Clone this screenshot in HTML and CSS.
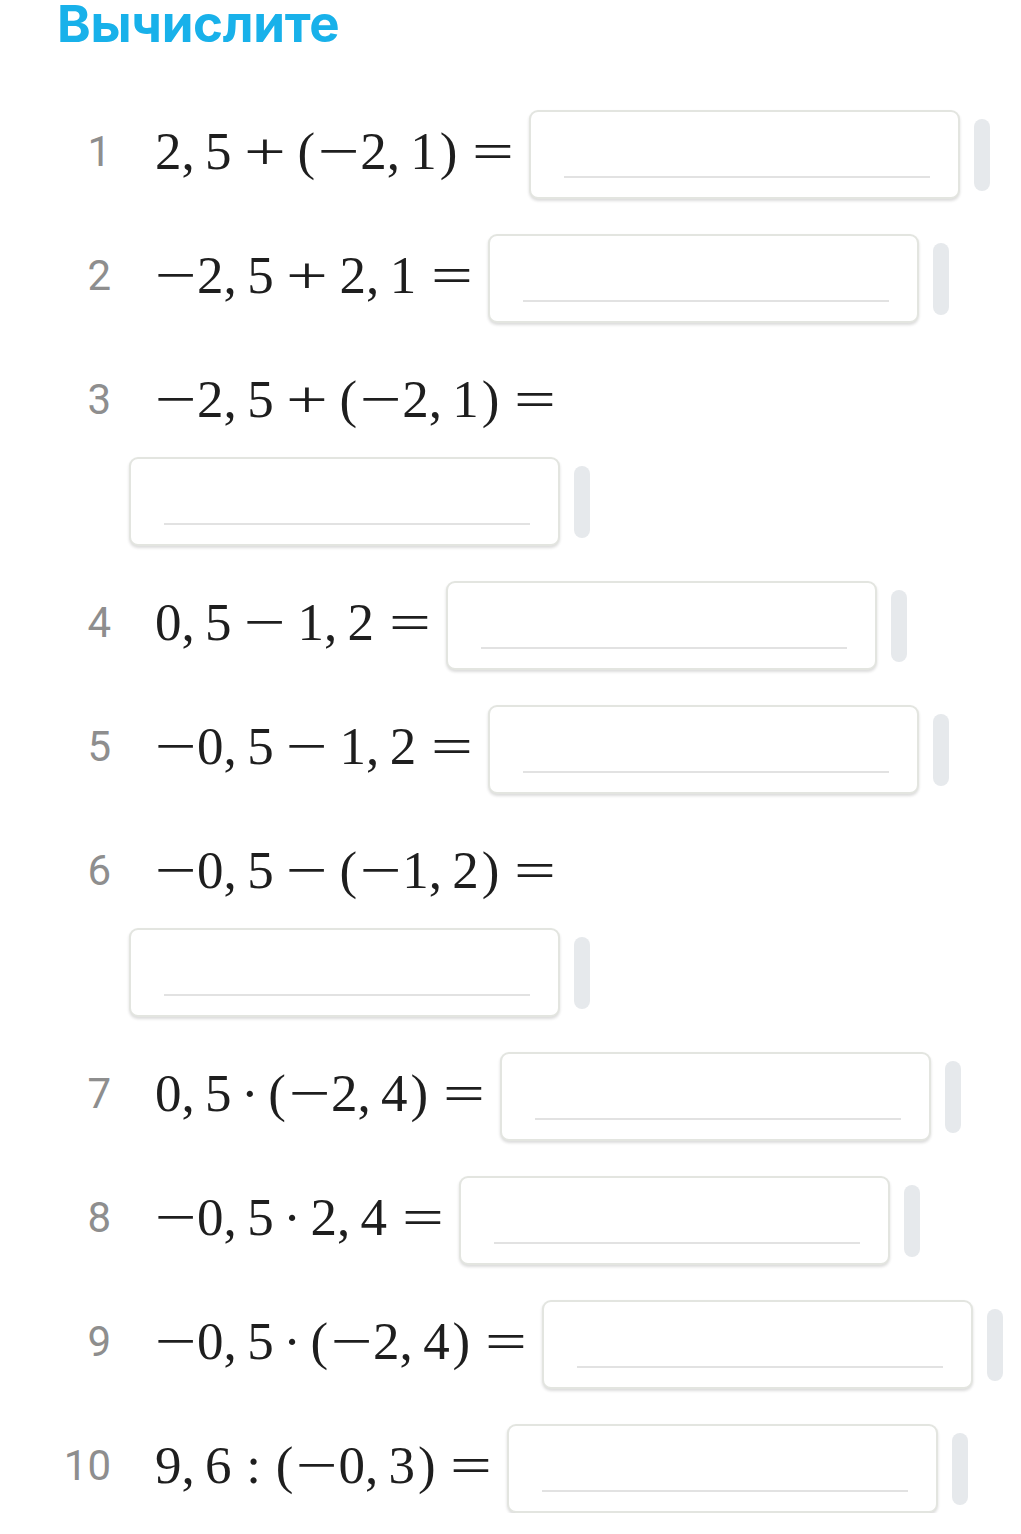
FILE: index.html
```html
<!DOCTYPE html>
<html lang="ru">
<head>
  <meta charset="UTF-8" />
  <meta name="viewport" content="width=device-width, initial-scale=1.0"/>
  <title>Вычислите</title>
  <link rel="stylesheet" href="styles.css">
</head>
<body>
  <main class="page">
    <h1 class="title">Вычислите</h1>

    <ol class="tasks">
      <li class="task">
        <span class="num">1</span>
        <div class="body">
          <span class="expr">2<span class="p">,</span>5<span class="bin">+</span><span class="lp">(</span><span class="neg">−</span>2<span class="p">,</span>1<span class="rp">)</span><span class="rel">=</span></span>
          <div class="answer"><label class="field"><span class="line"></span></label><span class="bar"></span></div>
        </div>
      </li>
      <li class="task">
        <span class="num">2</span>
        <div class="body">
          <span class="expr"><span class="neg">−</span>2<span class="p">,</span>5<span class="bin">+</span>2<span class="p">,</span>1<span class="rel">=</span></span>
          <div class="answer"><label class="field"><span class="line"></span></label><span class="bar"></span></div>
        </div>
      </li>
      <li class="task">
        <span class="num">3</span>
        <div class="body">
          <span class="expr"><span class="neg">−</span>2<span class="p">,</span>5<span class="bin">+</span><span class="lp">(</span><span class="neg">−</span>2<span class="p">,</span>1<span class="rp">)</span><span class="rel">=</span></span>
          <div class="answer"><label class="field"><span class="line"></span></label><span class="bar"></span></div>
        </div>
      </li>
      <li class="task">
        <span class="num">4</span>
        <div class="body">
          <span class="expr">0<span class="p">,</span>5<span class="bin">−</span>1<span class="p">,</span>2<span class="rel">=</span></span>
          <div class="answer"><label class="field"><span class="line"></span></label><span class="bar"></span></div>
        </div>
      </li>
      <li class="task">
        <span class="num">5</span>
        <div class="body">
          <span class="expr"><span class="neg">−</span>0<span class="p">,</span>5<span class="bin">−</span>1<span class="p">,</span>2<span class="rel">=</span></span>
          <div class="answer"><label class="field"><span class="line"></span></label><span class="bar"></span></div>
        </div>
      </li>
      <li class="task">
        <span class="num">6</span>
        <div class="body">
          <span class="expr"><span class="neg">−</span>0<span class="p">,</span>5<span class="bin">−</span><span class="lp">(</span><span class="neg">−</span>1<span class="p">,</span>2<span class="rp">)</span><span class="rel">=</span></span>
          <div class="answer"><label class="field"><span class="line"></span></label><span class="bar"></span></div>
        </div>
      </li>
      <li class="task">
        <span class="num">7</span>
        <div class="body">
          <span class="expr">0<span class="p">,</span>5<span class="dot">·</span><span class="lp">(</span><span class="neg">−</span>2<span class="p">,</span>4<span class="rp">)</span><span class="rel">=</span></span>
          <div class="answer"><label class="field"><span class="line"></span></label><span class="bar"></span></div>
        </div>
      </li>
      <li class="task">
        <span class="num">8</span>
        <div class="body">
          <span class="expr"><span class="neg">−</span>0<span class="p">,</span>5<span class="dot">·</span>2<span class="p">,</span>4<span class="rel">=</span></span>
          <div class="answer"><label class="field"><span class="line"></span></label><span class="bar"></span></div>
        </div>
      </li>
      <li class="task">
        <span class="num">9</span>
        <div class="body">
          <span class="expr"><span class="neg">−</span>0<span class="p">,</span>5<span class="dot">·</span><span class="lp">(</span><span class="neg">−</span>2<span class="p">,</span>4<span class="rp">)</span><span class="rel">=</span></span>
          <div class="answer"><label class="field"><span class="line"></span></label><span class="bar"></span></div>
        </div>
      </li>
      <li class="task">
        <span class="num">10</span>
        <div class="body">
          <span class="expr">9<span class="p">,</span>6<span class="colon">:</span><span class="lp">(</span><span class="neg">−</span>0<span class="p">,</span>3<span class="rp">)</span><span class="rel">=</span></span>
          <div class="answer"><label class="field"><span class="line"></span></label><span class="bar"></span></div>
        </div>
      </li>
    </ol>
  </main>
</body>
</html>
```

FILE: styles.css
```css
* {
  margin: 0;
  padding: 0;
  box-sizing: border-box;
}

body {
  background: #ffffff;
  font-family: Roboto, "Noto Sans", sans-serif;
}

.page {
  width: 1021px;
  padding: 1px 0 0 57px;
}

.title {
  font-family: Inter, "Noto Sans", sans-serif;
  font-size: 51px;
  font-weight: 700;
  line-height: 46px;
  letter-spacing: -0.3px;
  color: #18b1ea;
}

.tasks {
  list-style: none;
  margin-top: 63px;
  display: flex;
  flex-direction: column;
  gap: 35px;
}

.task {
  display: flex;
  align-items: flex-start;
}

.num {
  width: 54px;
  height: 89px;
  line-height: 84px;
  text-align: right;
  font-size: 42px;
  color: #8e8e8e;
  flex-shrink: 0;
}

.body {
  margin-left: 18px;
  width: 890px;
  display: flex;
  flex-wrap: wrap;
  align-items: center;
  row-gap: 10px;
  column-gap: 15px;
}

.expr {
  height: 89px;
  display: flex;
  align-items: center;
  padding-left: 26px;
  padding-bottom: 8px;
  font-family: "Liberation Serif", "Times New Roman", serif;
  font-size: 53px;
  color: #1e1e1e;
  white-space: nowrap;
}

.expr .p {
  margin-right: 0.195em;
}

.expr .bin,
.expr .neg,
.expr .rel {
  display: inline-block;
  transform: scaleX(1.4);
}

.expr .bin {
  margin: 0 0.34em;
}

.expr .neg {
  margin: 0 0.115em;
}

.expr .dot {
  margin: 0 0.18em;
}

.expr .colon {
  margin: 0 0.278em;
}

.expr .lp {
  margin-right: 0.056em;
}

.expr .rp {
  margin-left: 0.056em;
}

.expr .rel {
  margin-left: 0.393em;
  margin-right: 0.115em;
}

/* answer field */
.answer {
  display: flex;
  align-items: center;
  gap: 14px;
}

.field {
  display: block;
  position: relative;
  width: 431px;
  height: 89px;
  background: #fff;
  border: 2px solid #e3e5e0;
  border-radius: 9px;
  box-shadow: 0 2px 3px rgba(0, 0, 0, 0.14);
}

.field .line {
  position: absolute;
  left: 33px;
  right: 28px;
  bottom: 19px;
  height: 2px;
  background: #e2e2e2;
}

.bar {
  width: 16px;
  height: 72px;
  border-radius: 8px;
  background: #e6e9ec;
}
```
